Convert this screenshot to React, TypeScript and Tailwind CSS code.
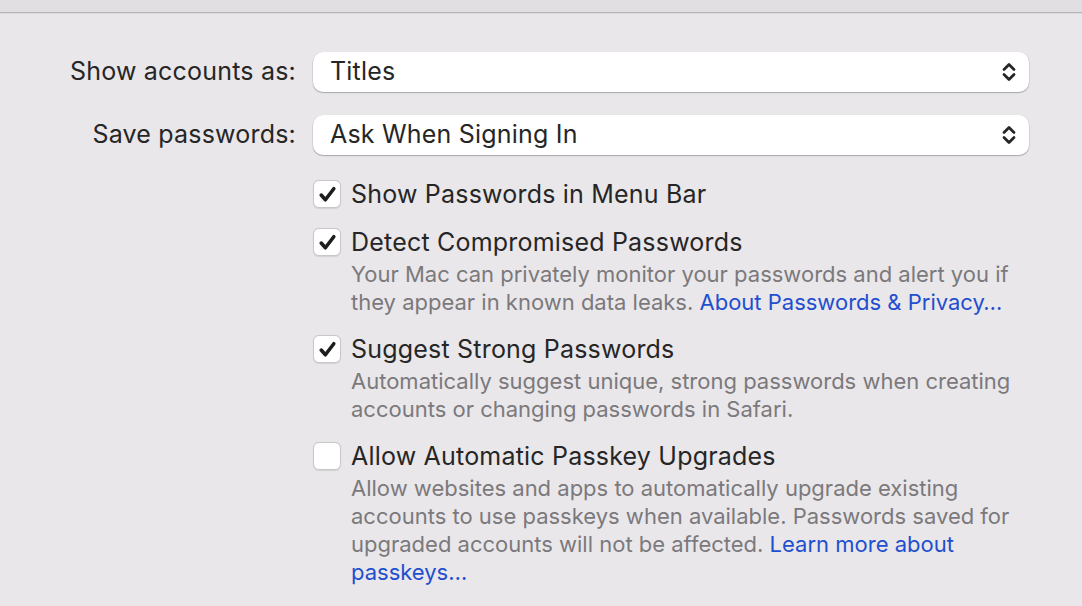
import React from "react";

const font = { fontFamily: "Inter, 'Noto Sans', sans-serif" };

function Chevrons() {
  return (
    <svg width="16" height="24" viewBox="0 0 16 24" fill="none" stroke="#262626" strokeWidth="2.8" strokeLinecap="round" strokeLinejoin="round">
      <path d="M3 9.5 L8 4.5 L13 9.5" />
      <path d="M3 14.5 L8 19.5 L13 14.5" />
    </svg>
  );
}

function Select({ value }: { value: string }) {
  return (
    <div className="flex h-[40px] flex-1 items-center justify-between rounded-[10px] bg-white pl-[17px] pr-[12px] shadow-[0_0.5px_0_0.5px_rgba(0,0,0,0.12),0_1px_1.5px_rgba(0,0,0,0.18)]">
      <span className="text-[25px] tracking-[0.2px] text-[#262626]">{value}</span>
      <Chevrons />
    </div>
  );
}

function Check({ checked }: { checked: boolean }) {
  return (
    <div className="mt-[1px] flex h-[28px] w-[28px] shrink-0 items-center justify-center rounded-[6px] border border-[#c8c7c9] bg-white shadow-[0_0.5px_1px_rgba(0,0,0,0.1)]">
      {checked && (
        <svg width="21" height="21" viewBox="0 0 20 20" fill="none" stroke="#1d1d1d" strokeWidth="3.4" strokeLinecap="round" strokeLinejoin="round">
          <path d="M4 10.5 L8 15 L16 4.5" />
        </svg>
      )}
    </div>
  );
}

function Option({ checked, title, children }: { checked: boolean; title: string; children?: React.ReactNode }) {
  return (
    <div className="flex gap-[10px]">
      <Check checked={checked} />
      <div className="flex flex-col">
        <div className="text-[25px] leading-[30px] tracking-[0.2px] text-[#262626]">{title}</div>
        {children && <div className="mt-[3px] text-[22px] leading-[28px] text-[#7b797c]">{children}</div>}
      </div>
    </div>
  );
}

export default function App() {
  return (
    <div style={font} className="h-[606px] w-[1082px] overflow-hidden bg-[#e9e7ea]">
      <div className="h-[12px] bg-[#e1dfe2]" />
      <div className="h-[1px] bg-[#b5b4b6]" />
      <div className="h-[1px] bg-[#dcdadd]" />
      <div className="pl-[60px] pr-[53px] pt-[38px]">
        <div className="flex items-center">
          <div className="w-[236px] text-right text-[25px] tracking-[0.2px] text-[#262626]">Show accounts as:</div>
          <div className="ml-[17px] flex flex-1"><Select value="Titles" /></div>
        </div>
        <div className="mt-[23px] flex items-center">
          <div className="w-[236px] text-right text-[25px] tracking-[0.2px] text-[#262626]">Save passwords:</div>
          <div className="ml-[17px] flex flex-1"><Select value="Ask When Signing In" /></div>
        </div>
        <div className="ml-[253px] mt-[24px] flex flex-col gap-[18px]">
          <Option checked title="Show Passwords in Menu Bar" />
          <Option checked title="Detect Compromised Passwords">
            Your Mac can privately monitor your passwords and alert you if
            <br />
            they appear in known data leaks. <span className="text-[#1f4fcf]">About Passwords &amp; Privacy…</span>
          </Option>
          <Option checked title="Suggest Strong Passwords">
            Automatically suggest unique, strong passwords when creating
            <br />
            accounts or changing passwords in Safari.
          </Option>
          <Option checked={false} title="Allow Automatic Passkey Upgrades">
            Allow websites and apps to automatically upgrade existing
            <br />
            accounts to use passkeys when available. Passwords saved for
            <br />
            upgraded accounts will not be affected. <span className="text-[#1f4fcf]">Learn more about</span>
            <br />
            <span className="text-[#1f4fcf]">passkeys…</span>
          </Option>
        </div>
      </div>
    </div>
  );
}
